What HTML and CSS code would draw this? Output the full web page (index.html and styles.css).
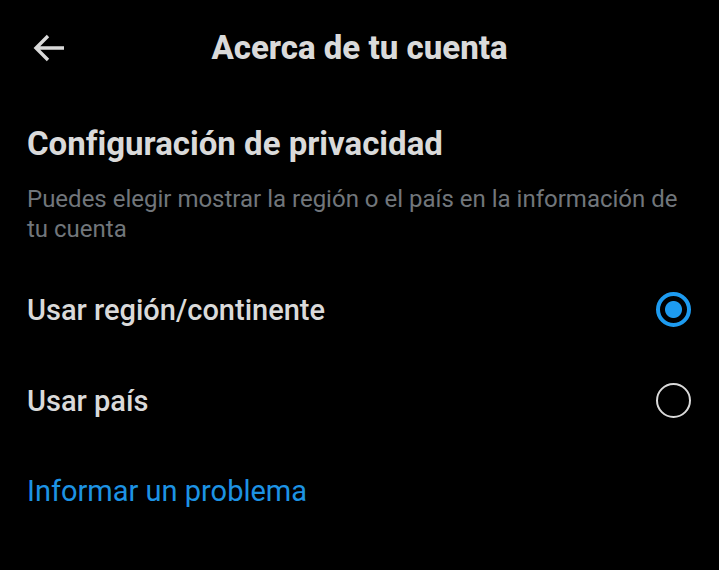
FILE: index.html
```html
<!DOCTYPE html>
<html lang="es">
<head>
<meta charset="utf-8">
<meta name="viewport" content="width=device-width, initial-scale=1">
<title>Acerca de tu cuenta</title>
<link rel="stylesheet" href="styles.css">
</head>
<body>
<header class="topbar">
  <button class="back" type="button" aria-label="Atrás">
    <svg viewBox="0 0 32 28" width="32" height="28" fill="none" stroke="currentColor" stroke-width="3.4" aria-hidden="true"><path d="M15 2 3 14l12 12M3 14h28"/></svg>
  </button>
  <h1 class="title">Acerca de tu cuenta</h1>
</header>
<main class="content">
  <h2 class="heading">Configuración de privacidad</h2>
  <p class="description">Puedes elegir mostrar la región o el país en la información de tu cuenta</p>
  <form class="options">
    <label class="option"><span>Usar región/continente</span><input class="radio" type="radio" name="place" checked></label>
    <label class="option"><span>Usar país</span><input class="radio" type="radio" name="place"></label>
  </form>
  <a class="report" href="#">Informar un problema</a>
</main>
</body>
</html>
```
FILE: styles.css
```css
* {
  box-sizing: border-box;
}

body {
  margin: 0;
  background: #000;
  color: #dadada;
  font-family: Roboto, "Liberation Sans", sans-serif;
  font-variant-ligatures: none;
}

h1, h2, p {
  margin: 0;
}

.topbar {
  display: grid;
  grid-template-columns: 32px 1fr 32px;
  align-items: center;
  height: 96px;
  padding: 0 33px;
}

.back {
  display: flex;
  padding: 0;
  border: 0;
  background: none;
  color: inherit;
}

.title {
  font-size: 33px;
  line-height: 40px;
  font-weight: 800;
  text-align: center;
}

.content {
  padding: 28px 28px 56px 27px;
}

.heading {
  font-size: 33px;
  line-height: 40px;
  font-weight: 700;
}

.description {
  margin-top: 20px;
  color: #71767b;
  font-size: 24px;
  line-height: 30px;
}

.options {
  padding-top: 20px;
}

.option {
  display: flex;
  align-items: center;
  justify-content: space-between;
  height: 91px;
  font-size: 29px;
  font-weight: 500;
}

.radio {
  appearance: none;
  width: 35px;
  height: 35px;
  margin: 0;
  border: 2px solid #dadada;
  border-radius: 50%;
}

.radio:checked {
  border: 4px solid #1d9bf0;
  background: radial-gradient(circle, #1d9bf0 8px, transparent 9px);
}

.report {
  display: inline-block;
  margin-top: 25px;
  color: #1d93e4;
  font-size: 29px;
  line-height: 40px;
  text-decoration: none;
}
```
